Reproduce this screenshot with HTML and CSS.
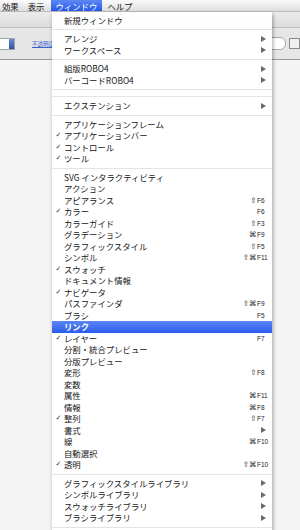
FILE: index.html
```html
<!DOCTYPE html>
<html lang="ja">
<head>
  <meta charset="UTF-8" />
  <title>ウィンドウ メニュー</title>
  <link rel="stylesheet" href="styles.css">
</head>
<body>
  <div class="screen">
    <div class="menubar">
      <span class="mb-item">効果</span>
      <span class="mb-item">表示</span>
      <span class="mb-item active">ウィンドウ</span>
      <span class="mb-item">ヘルプ</span>
    </div>

    <div class="app">
      <div class="strip"></div>
      <div class="toolbar">
        <div class="tb-left">
          <div class="combo"><span class="combo-btn"></span></div>
          <span class="tb-link">不透明度</span>
        </div>
        <div class="tb-right">
          <div class="field"></div>
          <div class="tool-btn"></div>
        </div>
      </div>
      <div class="canvas"></div>
    </div>

    <div class="dropdown">
      <div class="item"><span class="chk"></span><span class="label">新規ウィンドウ</span></div>
      <div class="sep"></div>
      <div class="item"><span class="chk"></span><span class="label">アレンジ</span><span class="key"><i class="arrow"></i></span></div>
      <div class="item"><span class="chk"></span><span class="label">ワークスペース</span><span class="key"><i class="arrow"></i></span></div>
      <div class="sep"></div>
      <div class="item"><span class="chk"></span><span class="label">組版ROBO4</span><span class="key"><i class="arrow"></i></span></div>
      <div class="item"><span class="chk"></span><span class="label">バーコードROBO4</span><span class="key"><i class="arrow"></i></span></div>
      <div class="sep"></div>
      <div class="sep"></div>
      <div class="item"><span class="chk"></span><span class="label">エクステンション</span><span class="key"><i class="arrow"></i></span></div>
      <div class="sep"></div>
      <div class="item"><span class="chk"></span><span class="label">アプリケーションフレーム</span></div>
      <div class="item"><span class="chk">✓</span><span class="label">アプリケーションバー</span></div>
      <div class="item"><span class="chk">✓</span><span class="label">コントロール</span></div>
      <div class="item"><span class="chk">✓</span><span class="label">ツール</span></div>
      <div class="sep"></div>
      <div class="item"><span class="chk"></span><span class="label">SVG インタラクティビティ</span></div>
      <div class="item"><span class="chk"></span><span class="label">アクション</span></div>
      <div class="item"><span class="chk"></span><span class="label">アピアランス</span><span class="mods">⇧</span><span class="key">F6</span></div>
      <div class="item"><span class="chk">✓</span><span class="label">カラー</span><span class="mods"></span><span class="key">F6</span></div>
      <div class="item"><span class="chk"></span><span class="label">カラーガイド</span><span class="mods">⇧</span><span class="key">F3</span></div>
      <div class="item"><span class="chk"></span><span class="label">グラデーション</span><span class="mods">⌘</span><span class="key">F9</span></div>
      <div class="item"><span class="chk"></span><span class="label">グラフィックスタイル</span><span class="mods">⇧</span><span class="key">F5</span></div>
      <div class="item"><span class="chk"></span><span class="label">シンボル</span><span class="mods">⇧⌘</span><span class="key">F11</span></div>
      <div class="item"><span class="chk">✓</span><span class="label">スウォッチ</span></div>
      <div class="item"><span class="chk"></span><span class="label">ドキュメント情報</span></div>
      <div class="item"><span class="chk">✓</span><span class="label">ナビゲータ</span></div>
      <div class="item"><span class="chk"></span><span class="label">パスファインダ</span><span class="mods">⇧⌘</span><span class="key">F9</span></div>
      <div class="item"><span class="chk"></span><span class="label">ブラシ</span><span class="mods"></span><span class="key">F5</span></div>
      <div class="item selected"><span class="chk"></span><span class="label">リンク</span></div>
      <div class="item"><span class="chk">✓</span><span class="label">レイヤー</span><span class="mods"></span><span class="key">F7</span></div>
      <div class="item"><span class="chk"></span><span class="label">分割・統合プレビュー</span></div>
      <div class="item"><span class="chk"></span><span class="label">分版プレビュー</span></div>
      <div class="item"><span class="chk"></span><span class="label">変形</span><span class="mods">⇧</span><span class="key">F8</span></div>
      <div class="item"><span class="chk"></span><span class="label">変数</span></div>
      <div class="item"><span class="chk"></span><span class="label">属性</span><span class="mods">⌘</span><span class="key">F11</span></div>
      <div class="item"><span class="chk"></span><span class="label">情報</span><span class="mods">⌘</span><span class="key">F8</span></div>
      <div class="item"><span class="chk">✓</span><span class="label">整列</span><span class="mods">⇧</span><span class="key">F7</span></div>
      <div class="item"><span class="chk"></span><span class="label">書式</span><span class="key"><i class="arrow"></i></span></div>
      <div class="item"><span class="chk"></span><span class="label">線</span><span class="mods">⌘</span><span class="key">F10</span></div>
      <div class="item"><span class="chk"></span><span class="label">自動選択</span></div>
      <div class="item"><span class="chk">✓</span><span class="label">透明</span><span class="mods">⇧⌘</span><span class="key">F10</span></div>
      <div class="sep"></div>
      <div class="item"><span class="chk"></span><span class="label">グラフィックスタイルライブラリ</span><span class="key"><i class="arrow"></i></span></div>
      <div class="item"><span class="chk"></span><span class="label">シンボルライブラリ</span><span class="key"><i class="arrow"></i></span></div>
      <div class="item"><span class="chk"></span><span class="label">スウォッチライブラリ</span><span class="key"><i class="arrow"></i></span></div>
      <div class="item"><span class="chk"></span><span class="label">ブラシライブラリ</span><span class="key"><i class="arrow"></i></span></div>
      <div class="sep"></div>
      <div class="item"></div>
    </div>
  </div>
</body>
</html>
```

FILE: styles.css
```css
body {
  margin: 0;
  font-family: "Noto Sans CJK JP", "DejaVu Sans", sans-serif;
  color: #161616;
}
.screen {
  position: relative;
  width: 300px;
  height: 530px;
  overflow: hidden;
  background: #f4f4f4;
}

/* menu bar */
.menubar {
  display: flex;
  height: 12px;
  background: linear-gradient(#fbfbfb, #dedede);
  border-bottom: 1px solid #b9b9b9;
  box-sizing: border-box;
  font-size: 8.4px;
  line-height: 12px;
  padding-left: 2px;
}
.mb-item {
  padding: 0 5px 0 0;
  margin-right: 4px;
}
.mb-item.active {
  background: linear-gradient(#5d88f4, #2558ea);
  color: #fff;
  padding: 0 5px;
  margin-left: -3px;
  margin-right: 5px;
}

/* application behind */
.app {
  display: flex;
  flex-direction: column;
}
.strip {
  height: 15px;
  background: linear-gradient(#ececec, #dcdcdc);
  border-bottom: 1px solid #bdbdbd;
}
.toolbar {
  height: 31px;
  display: flex;
  justify-content: space-between;
  align-items: center;
  background: #e6e6e6;
  border-bottom: 1px solid #9a9a9a;
}
.tb-left {
  display: flex;
  align-items: center;
  gap: 17px;
}
.combo {
  width: 15px;
  height: 12px;
  background: #fff;
  border: 1px solid #a4a4a4;
  border-left: none;
  box-sizing: border-box;
  display: flex;
  justify-content: flex-end;
}
.combo-btn {
  width: 5px;
  background: linear-gradient(#6a8fd8, #2a4f9e);
}
.tb-link {
  font-size: 5.5px;
  color: #3a5fcf;
  text-decoration: underline;
}
.tb-right {
  display: flex;
  align-items: center;
  gap: 3px;
}
.field {
  width: 14px;
  height: 11px;
  background: #fff;
  border: 1px solid #a8a8a8;
  border-radius: 0 6px 6px 0;
}
.tool-btn {
  width: 11px;
  height: 11px;
  background: #f0f0f0;
  border: 1px solid #8a8a8a;
  box-sizing: border-box;
}
.canvas {
  flex: 1;
  height: 470px;
  background: linear-gradient(#a9a9a9, #f2f2f2 8px, #f2f2f2);
}

/* dropdown */
.dropdown {
  position: absolute;
  left: 52px;
  top: 12px;
  width: 220px;
  padding-top: 2.5px;
  background: rgba(255, 255, 255, 0.97);
  box-shadow: 1px 2px 4px rgba(0, 0, 0, 0.35);
  font-size: 8.4px;
}
.item {
  display: flex;
  align-items: center;
  height: 11.5px;
  line-height: 11.5px;
  padding-right: 3px;
  white-space: nowrap;
}
.chk {
  width: 12px;
  flex: none;
  text-align: center;
  font-family: "DejaVu Sans", sans-serif;
  font-size: 7px;
  color: #333;
  padding-left: 1px;
  box-sizing: border-box;
}
.label {
  flex: 1;
}
.mods {
  font-family: "DejaVu Sans", sans-serif;
  font-size: 7.5px;
  color: #222;
  padding-right: 0.5px;
}
.key {
  width: 12px;
  flex: none;
  font-family: "Liberation Sans", sans-serif;
  font-size: 6.5px;
  color: #222;
  display: flex;
  align-items: center;
}
.arrow {
  display: block;
  margin-left: 4px;
  width: 0;
  height: 0;
  border-top: 3px solid transparent;
  border-bottom: 3px solid transparent;
  border-left: 5px solid #6a6a6a;
}
.sep {
  height: 7px;
  display: flex;
  align-items: center;
}
.sep::after {
  content: "";
  flex: 1;
  height: 1px;
  background: #e4e4e4;
}
.item.selected {
  background: linear-gradient(#5b86f4, #2a5cec);
  color: #fff;
  font-weight: bold;
}
```
